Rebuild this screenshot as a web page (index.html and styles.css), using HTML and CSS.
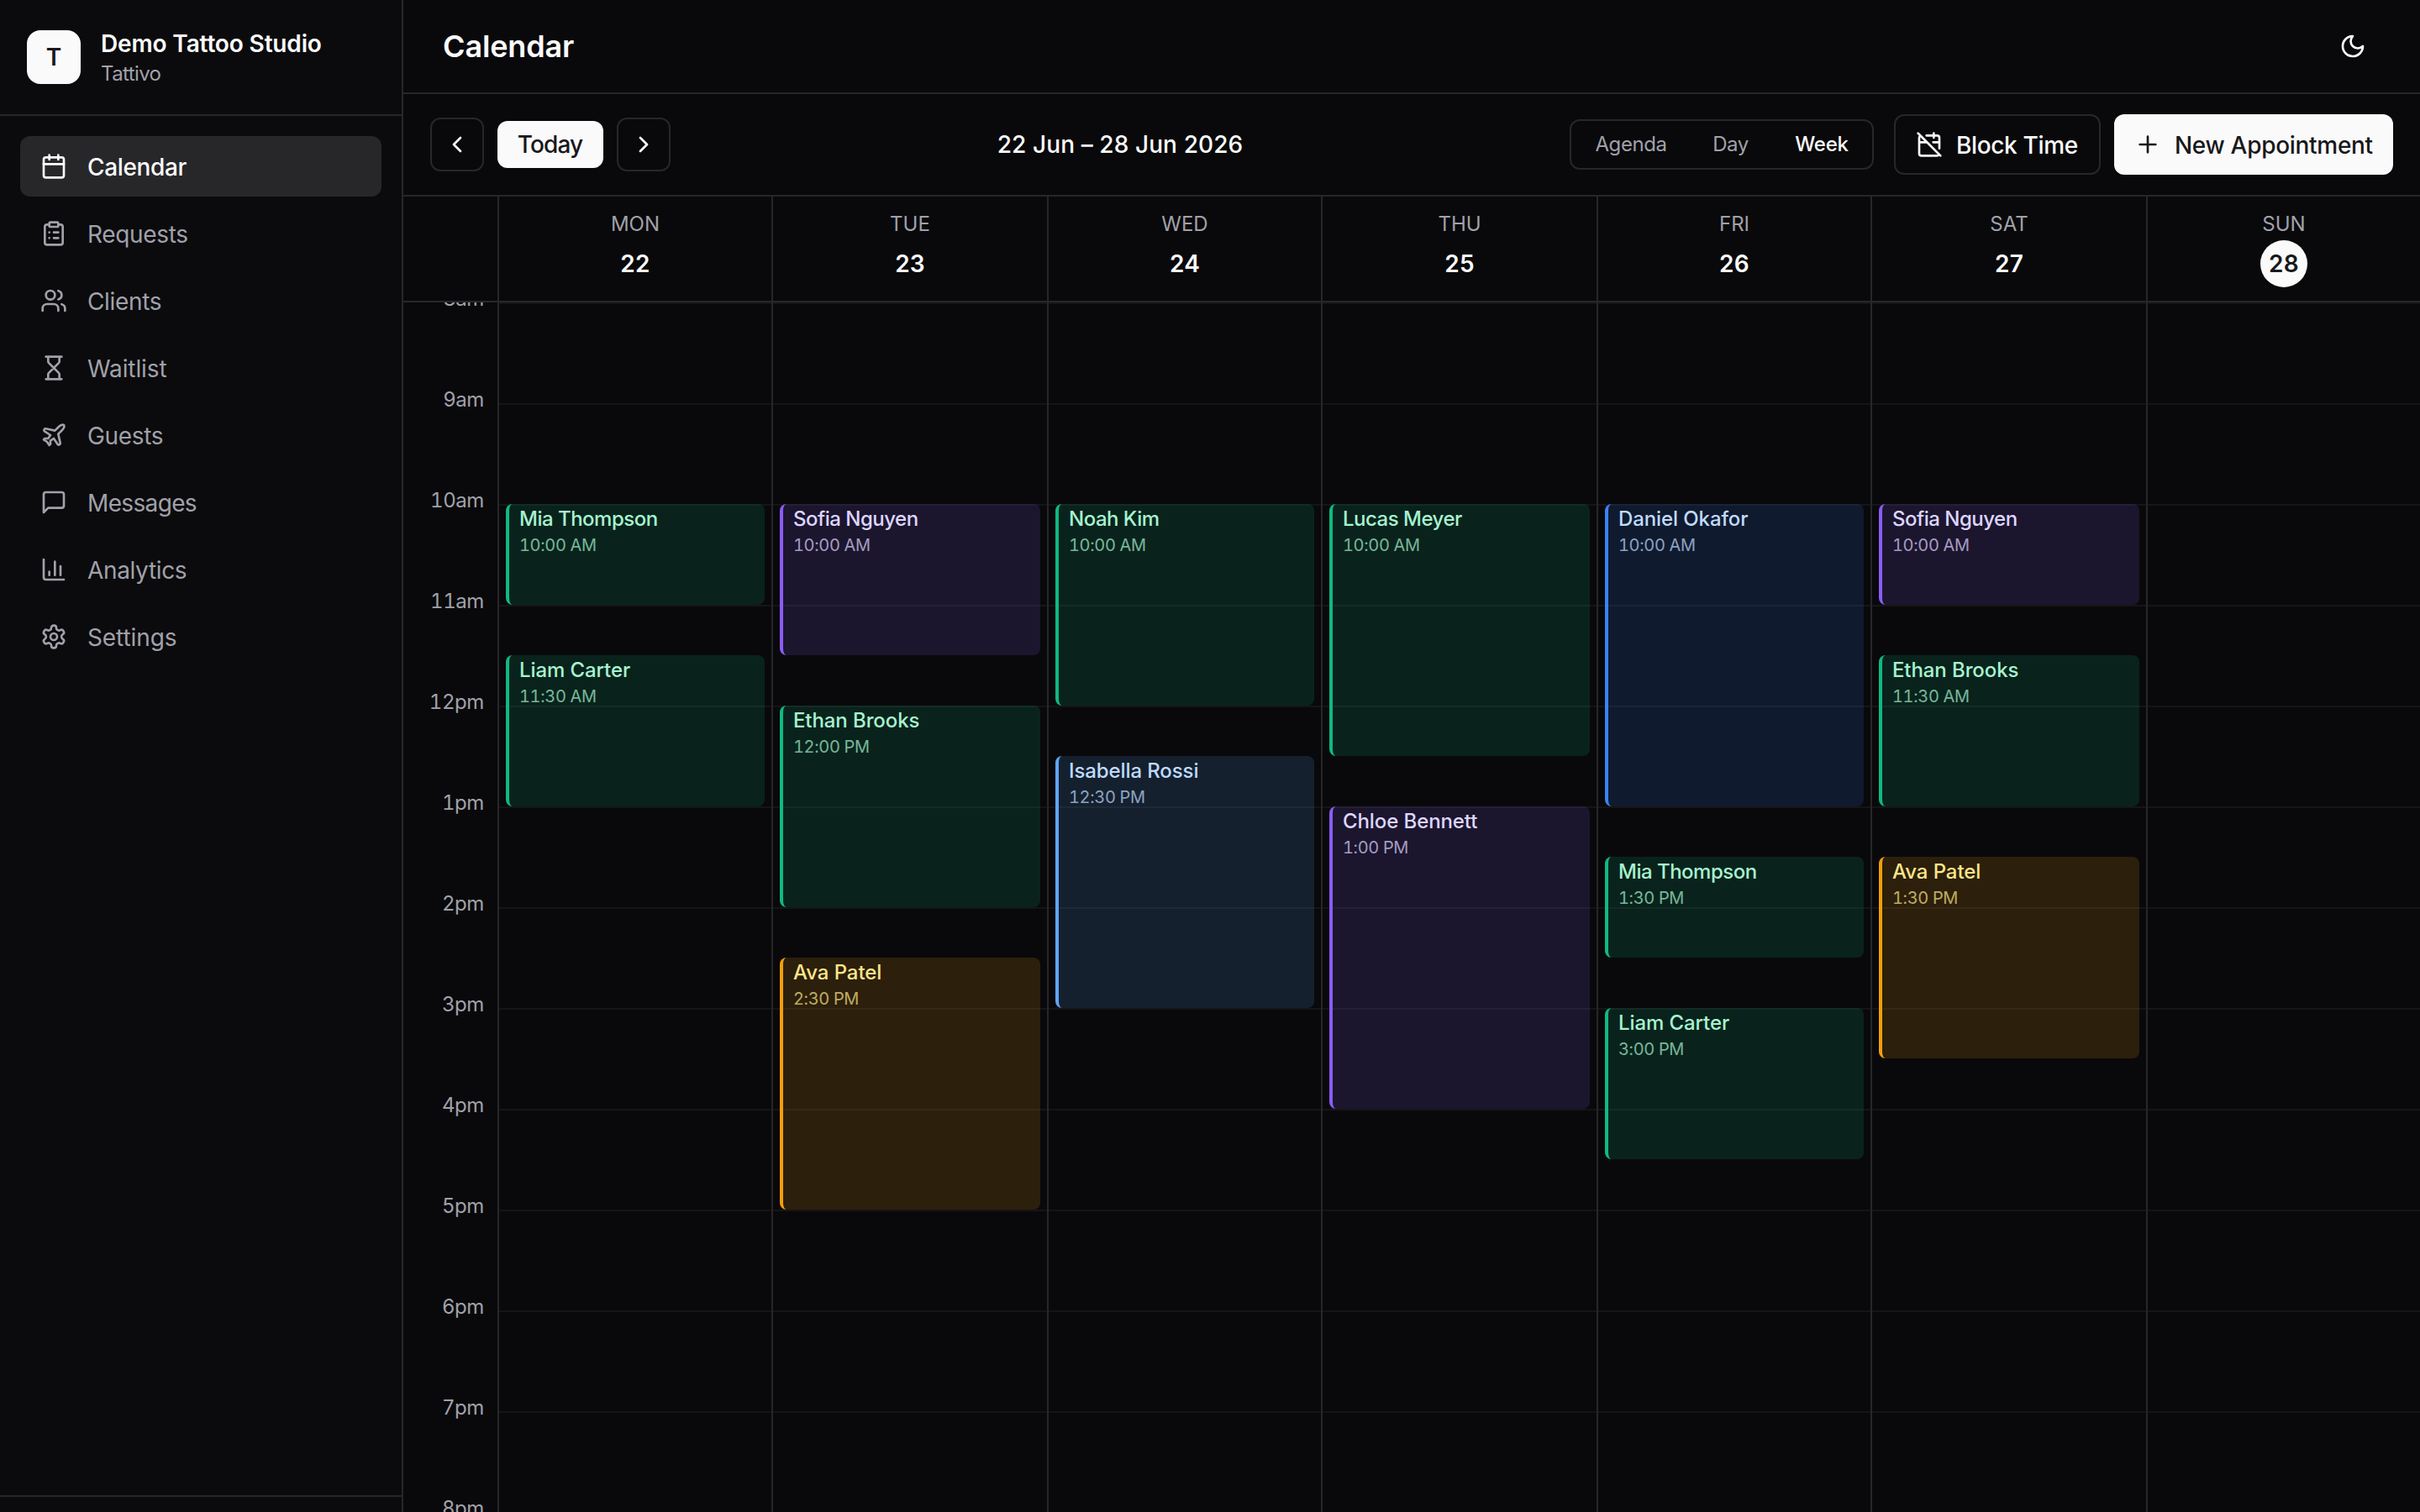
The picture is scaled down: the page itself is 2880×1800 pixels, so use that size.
FILE: index.html
```html
<!DOCTYPE html>
<html lang="en">
<head>
<meta charset="utf-8">
<title>Calendar</title>
<link rel="stylesheet" href="styles.css">
</head>
<body>
<div class="app">
  <aside class="sidebar">
    <div class="brand">
      <div class="brand-logo">T</div>
      <div class="brand-text">
        <span class="brand-name">Demo Tattoo Studio</span>
        <span class="brand-sub">Tattivo</span>
      </div>
    </div>
    <nav class="nav">
      <a class="nav-item active"><svg class="icon" viewBox="0 0 24 24"><path d="M8 2v4M16 2v4"/><rect width="18" height="18" x="3" y="4" rx="2"/><path d="M3 10h18"/></svg><span>Calendar</span></a>
      <a class="nav-item"><svg class="icon" viewBox="0 0 24 24"><rect width="8" height="4" x="8" y="2" rx="1"/><path d="M16 4h2a2 2 0 0 1 2 2v14a2 2 0 0 1-2 2H6a2 2 0 0 1-2-2V6a2 2 0 0 1 2-2h2M12 11h4M12 16h4M8 11h.01M8 16h.01"/></svg><span>Requests</span></a>
      <a class="nav-item"><svg class="icon" viewBox="0 0 24 24"><path d="M16 21v-2a4 4 0 0 0-4-4H6a4 4 0 0 0-4 4v2"/><circle cx="9" cy="7" r="4"/><path d="M22 21v-2a4 4 0 0 0-3-3.87M16 3.13a4 4 0 0 1 0 7.75"/></svg><span>Clients</span></a>
      <a class="nav-item loose"><svg class="icon" viewBox="0 0 24 24"><path d="M5 22h14M5 2h14M17 22v-4.172a2 2 0 0 0-.586-1.414L12 12l-4.414 4.414A2 2 0 0 0 7 17.828V22M7 2v4.172a2 2 0 0 0 .586 1.414L12 12l4.414-4.414A2 2 0 0 0 17 6.172V2"/></svg><span>Waitlist</span></a>
      <a class="nav-item"><svg class="icon" viewBox="0 0 24 24"><path d="M17.8 19.2 16 11l3.5-3.5C21 6 21.5 4 21 3c-1-.5-3 0-4.5 1.5L13 8 4.8 6.2c-.5-.1-.9.1-1.1.5l-.3.5c-.2.5-.1 1 .3 1.3L9 12l-2 3H4l-1 1 3 2 2 3 1-1v-3l3-2 3.5 5.3c.3.4.8.5 1.3.2l.5-.2c.4-.3.6-.7.5-1.2z"/></svg><span>Guests</span></a>
      <a class="nav-item tight"><svg class="icon" viewBox="0 0 24 24"><path d="M21 15a2 2 0 0 1-2 2H7l-4 4V5a2 2 0 0 1 2-2h14a2 2 0 0 1 2 2z"/></svg><span>Messages</span></a>
      <a class="nav-item"><svg class="icon" viewBox="0 0 24 24"><path d="M3 3v16a2 2 0 0 0 2 2h16M18 17V9M13 17V5M8 17v-3"/></svg><span>Analytics</span></a>
      <a class="nav-item loose"><svg class="icon" viewBox="0 0 24 24"><path d="M12.22 2h-.44a2 2 0 0 0-2 2v.18a2 2 0 0 1-1 1.73l-.43.25a2 2 0 0 1-2 0l-.15-.08a2 2 0 0 0-2.73.73l-.22.38a2 2 0 0 0 .73 2.73l.15.1a2 2 0 0 1 1 1.72v.51a2 2 0 0 1-1 1.74l-.15.09a2 2 0 0 0-.73 2.73l.22.38a2 2 0 0 0 2.73.73l.15-.08a2 2 0 0 1 2 0l.43.25a2 2 0 0 1 1 1.73V20a2 2 0 0 0 2 2h.44a2 2 0 0 0 2-2v-.18a2 2 0 0 1 1-1.73l.43-.25a2 2 0 0 1 2 0l.15.08a2 2 0 0 0 2.73-.73l.22-.39a2 2 0 0 0-.73-2.73l-.15-.08a2 2 0 0 1-1-1.74v-.5a2 2 0 0 1 1-1.74l.15-.09a2 2 0 0 0 .73-2.73l-.22-.38a2 2 0 0 0-2.73-.73l-.15.08a2 2 0 0 1-2 0l-.43-.25a2 2 0 0 1-1-1.73V4a2 2 0 0 0-2-2z"/><circle cx="12" cy="12" r="3"/></svg><span>Settings</span></a>
    </nav>
    <div class="sidebar-foot"></div>
  </aside>
  <main class="main">
    <header class="topbar">
      <h1>Calendar</h1>
      <svg class="icon" viewBox="0 0 24 24"><path d="M12 3a6 6 0 0 0 9 9 9 9 0 1 1-9-9Z"/></svg>
    </header>
    <div class="toolbar">
      <div class="nav-group">
        <button class="square"><svg class="icon" viewBox="0 0 24 24"><path d="m15 18-6-6 6-6"/></svg></button>
        <button class="today">Today</button>
        <button class="square"><svg class="icon" viewBox="0 0 24 24"><path d="m9 18 6-6-6-6"/></svg></button>
      </div>
      <div class="range">22 Jun – 28 Jun 2026</div>
      <div class="actions">
        <div class="segments"><span class="seg seg-agenda">Agenda</span><span class="seg seg-day">Day</span><span class="seg seg-week">Week</span></div>
        <button class="block"><svg class="icon" viewBox="0 0 24 24"><path d="M4.2 4.2A2 2 0 0 0 3 6v14a2 2 0 0 0 2 2h14a2 2 0 0 0 1.82-1.18M21 15.5V6a2 2 0 0 0-2-2H9.5M16 2v4M3 10h7M21 10h-5.5M2 2l20 20"/></svg><span>Block Time</span></button>
        <button class="new"><svg class="icon" viewBox="0 0 24 24"><path d="M5 12h14M12 5v14"/></svg><span>New Appointment</span></button>
      </div>
    </div>
    <div class="days">
      <div></div>
      <div class="day"><span class="dow">MON</span><span class="num">22</span></div>
      <div class="day"><span class="dow">TUE</span><span class="num">23</span></div>
      <div class="day"><span class="dow">WED</span><span class="num">24</span></div>
      <div class="day"><span class="dow">THU</span><span class="num">25</span></div>
      <div class="day"><span class="dow">FRI</span><span class="num">26</span></div>
      <div class="day"><span class="dow">SAT</span><span class="num">27</span></div>
      <div class="day"><span class="dow">SUN</span><span class="num now">28</span></div>
    </div>
    <div class="week">
      <div class="hours">
        <span>8am</span><span>9am</span><span>10am</span><span>11am</span><span>12pm</span><span>1pm</span><span>2pm</span><span>3pm</span><span>4pm</span><span>5pm</span><span>6pm</span><span>7pm</span><span>8pm</span>
      </div>
      <div class="col">
        <div class="event green" style="--start:2;--len:1"><b class="tight">Mia Thompson</b><i>10:00 AM</i></div>
        <div class="event green" style="--start:3.5;--len:1.5"><b>Liam Carter</b><i>11:30 AM</i></div>
      </div>
      <div class="col">
        <div class="event violet" style="--start:2;--len:1.5"><b class="tight">Sofia Nguyen</b><i>10:00 AM</i></div>
        <div class="event green" style="--start:4;--len:2"><b>Ethan Brooks</b><i>12:00 PM</i></div>
        <div class="event amber" style="--start:6.5;--len:2.5"><b>Ava Patel</b><i>2:30 PM</i></div>
      </div>
      <div class="col">
        <div class="event green" style="--start:2;--len:2"><b class="tight">Noah Kim</b><i>10:00 AM</i></div>
        <div class="event sky" style="--start:4.5;--len:2.5"><b>Isabella Rossi</b><i>12:30 PM</i></div>
      </div>
      <div class="col">
        <div class="event green" style="--start:2;--len:2.5"><b class="tight">Lucas Meyer</b><i>10:00 AM</i></div>
        <div class="event violet" style="--start:5;--len:3"><b>Chloe Bennett</b><i>1:00 PM</i></div>
      </div>
      <div class="col">
        <div class="event blue" style="--start:2;--len:3"><b>Daniel Okafor</b><i>10:00 AM</i></div>
        <div class="event green" style="--start:5.5;--len:1"><b class="tight">Mia Thompson</b><i>1:30 PM</i></div>
        <div class="event green" style="--start:7;--len:1.5"><b>Liam Carter</b><i>3:00 PM</i></div>
      </div>
      <div class="col">
        <div class="event violet" style="--start:2;--len:1"><b class="tight">Sofia Nguyen</b><i>10:00 AM</i></div>
        <div class="event green" style="--start:3.5;--len:1.5"><b>Ethan Brooks</b><i>11:30 AM</i></div>
        <div class="event amber" style="--start:5.5;--len:2"><b>Ava Patel</b><i>1:30 PM</i></div>
      </div>
      <div class="col"></div>
    </div>
  </main>
</div>
</body>
</html>
```
FILE: styles.css
```css
:root {
  --bg: #09090b;
  --side: #0b0b0d;
  --line: #27272a;
  --fg: #fafafa;
  --muted: #a1a1aa;
  --hour: 120px;
}
* { box-sizing: border-box; margin: 0; padding: 0; }
body {
  background: var(--bg);
  color: var(--fg);
  font-family: Inter, "Liberation Sans", sans-serif;
  font-size: 28px;
  line-height: 40px;
}
button { font: inherit; color: inherit; background: none; border: 0; }
.icon {
  width: 32px; height: 32px; flex: none; display: block;
  fill: none; stroke: currentColor; stroke-width: 2;
  stroke-linecap: round; stroke-linejoin: round;
}
.app { display: flex; width: 2880px; height: 1800px; overflow: hidden; }

.sidebar {
  width: 480px; flex: none; display: flex; flex-direction: column;
  background: var(--side); border-right: 2px solid var(--line);
}
.brand {
  height: 138px; display: flex; align-items: center; gap: 24px;
  padding: 0 32px; border-bottom: 2px solid var(--line);
}
.brand-logo {
  width: 64px; height: 64px; border-radius: 16px; background: var(--fg);
  color: #18181b; font-weight: 600; line-height: 65px; text-align: center;
}
.brand-text { display: flex; flex-direction: column; padding-top: 4px; white-space: nowrap; }
.brand-name { line-height: 35px; font-weight: 600; letter-spacing: -0.15px; }
.brand-sub { font-size: 24px; line-height: 36px; color: var(--muted); letter-spacing: -0.6px; }
.nav { flex: 1; display: flex; flex-direction: column; gap: 8px; padding: 24px; }
.nav-item {
  height: 72px; display: flex; align-items: center; gap: 24px; padding: 0 24px;
  border-radius: 12px; color: var(--muted); letter-spacing: -0.35px;
}
.nav-item span { line-height: 40px; padding-top: 1px; }
.nav-item.loose { letter-spacing: -0.1px; }
.nav-item.tight { letter-spacing: -0.65px; }
.nav-item.active { background: var(--line); color: var(--fg); font-weight: 500; }
.sidebar-foot { height: 20px; border-top: 2px solid var(--line); }

.main { flex: 1; min-width: 0; display: flex; flex-direction: column; }
.topbar {
  height: 112px; flex: none; display: flex; align-items: center; justify-content: space-between;
  padding: 0 64px 0 47px; border-bottom: 2px solid var(--line);
}
h1 { font-size: 36px; font-weight: 600; letter-spacing: -0.15px; }
.toolbar {
  height: 122px; flex: none; display: flex; align-items: center; justify-content: space-between;
  padding: 0 32px; border-bottom: 2px solid var(--line); font-weight: 500; white-space: nowrap;
}
.nav-group { display: flex; align-items: center; gap: 16px; }
.square {
  width: 64px; height: 64px; border: 2px solid var(--line); border-radius: 12px;
  display: grid; place-items: center;
}
.today {
  width: 126px; height: 56px; border-radius: 12px; background: var(--fg); color: #18181b;
  padding-right: 1px; letter-spacing: -0.9px;
}
.range { letter-spacing: 0.1px; }
.actions { display: flex; align-items: center; gap: 16px; }
.segments {
  width: 362px; height: 60px; margin-right: 8px; padding: 0 2px; display: flex; align-items: center;
  border: 2px solid var(--line); border-radius: 12px; font-size: 24px; color: var(--muted);
  font-weight: 400; letter-spacing: -0.45px;
}
.seg { flex: none; text-align: center; }
.seg-agenda { width: 138px; }
.seg-day { width: 99px; }
.seg-week { width: 118px; color: var(--fg); font-weight: 500; letter-spacing: -0.2px; }
.block, .new { height: 72px; display: flex; align-items: center; gap: 16px; padding: 0 24px; border-radius: 12px; }
.block span, .new span { padding-top: 1px; }
.block { width: 246px; border: 2px solid var(--line); letter-spacing: -0.35px; }
.new { width: 332px; background: var(--fg); color: #18181b; letter-spacing: -0.3px; }

.days, .week { display: grid; grid-template-columns: 112px 326px 328px 326px 328px 326px 328px 326px; }
.days { height: 126px; flex: none; border-bottom: 2px solid var(--line); }
.day {
  display: flex; flex-direction: column; align-items: center; gap: 4px;
  padding-top: 16px; border-left: 2px solid var(--line);
}
.dow { font-size: 24px; line-height: 33px; margin-bottom: -1px; color: var(--muted); }
.num { width: 56px; line-height: 56px; text-align: center; font-weight: 600; letter-spacing: 0.2px; }
.num.now { border-radius: 50%; background: var(--fg); color: #18181b; }

.week { height: 1440px; flex: none; }
.hours {
  display: flex; flex-direction: column; overflow: hidden; padding-right: 16px;
  font-size: 24px; line-height: 32px; color: var(--muted); text-align: right;
  font-variant-numeric: tabular-nums; letter-spacing: -0.4px;
}
.hours span { flex: none; height: var(--hour); }
.hours span:first-child { margin-top: -20px; }
.col {
  position: relative; border-left: 2px solid var(--line);
  background: repeating-linear-gradient(to bottom, #151517 0 2px, transparent 2px var(--hour));
}
/* Appointments are placed by hours elapsed since 8am. */
.event {
  position: absolute; left: 8px; right: 8px;
  top: calc(var(--start) * var(--hour)); height: calc(var(--len) * var(--hour));
  display: flex; flex-direction: column; gap: 1px; padding: 3px 12px;
  border-left: 4px solid; border-radius: 8px; white-space: nowrap;
}
.event b { font-size: 24px; line-height: 30px; font-weight: 500; letter-spacing: -0.1px; }
.event b.tight { letter-spacing: -0.5px; }
.event i {
  font-size: 20px; line-height: 30px; font-style: normal; opacity: .7;
  font-variant-numeric: tabular-nums; letter-spacing: -0.35px;
}
.green { background: rgba(16, 185, 129, .15); border-color: #10b981; }
.green > * { color: #a7f3d0; }
.violet { background: rgba(139, 92, 246, .15); border-color: #8b5cf6; }
.violet > * { color: #ddd6fe; }
.amber { background: rgba(245, 158, 11, .15); border-color: #f59e0b; }
.amber > * { color: #fde68a; }
.blue { background: rgba(59, 130, 246, .15); border-color: #3b82f6; }
.blue > * { color: #bfdbfe; }
.sky { background: rgba(96, 165, 250, .15); border-color: #60a5fa; }
.sky > * { color: #bfdbfe; }
```
